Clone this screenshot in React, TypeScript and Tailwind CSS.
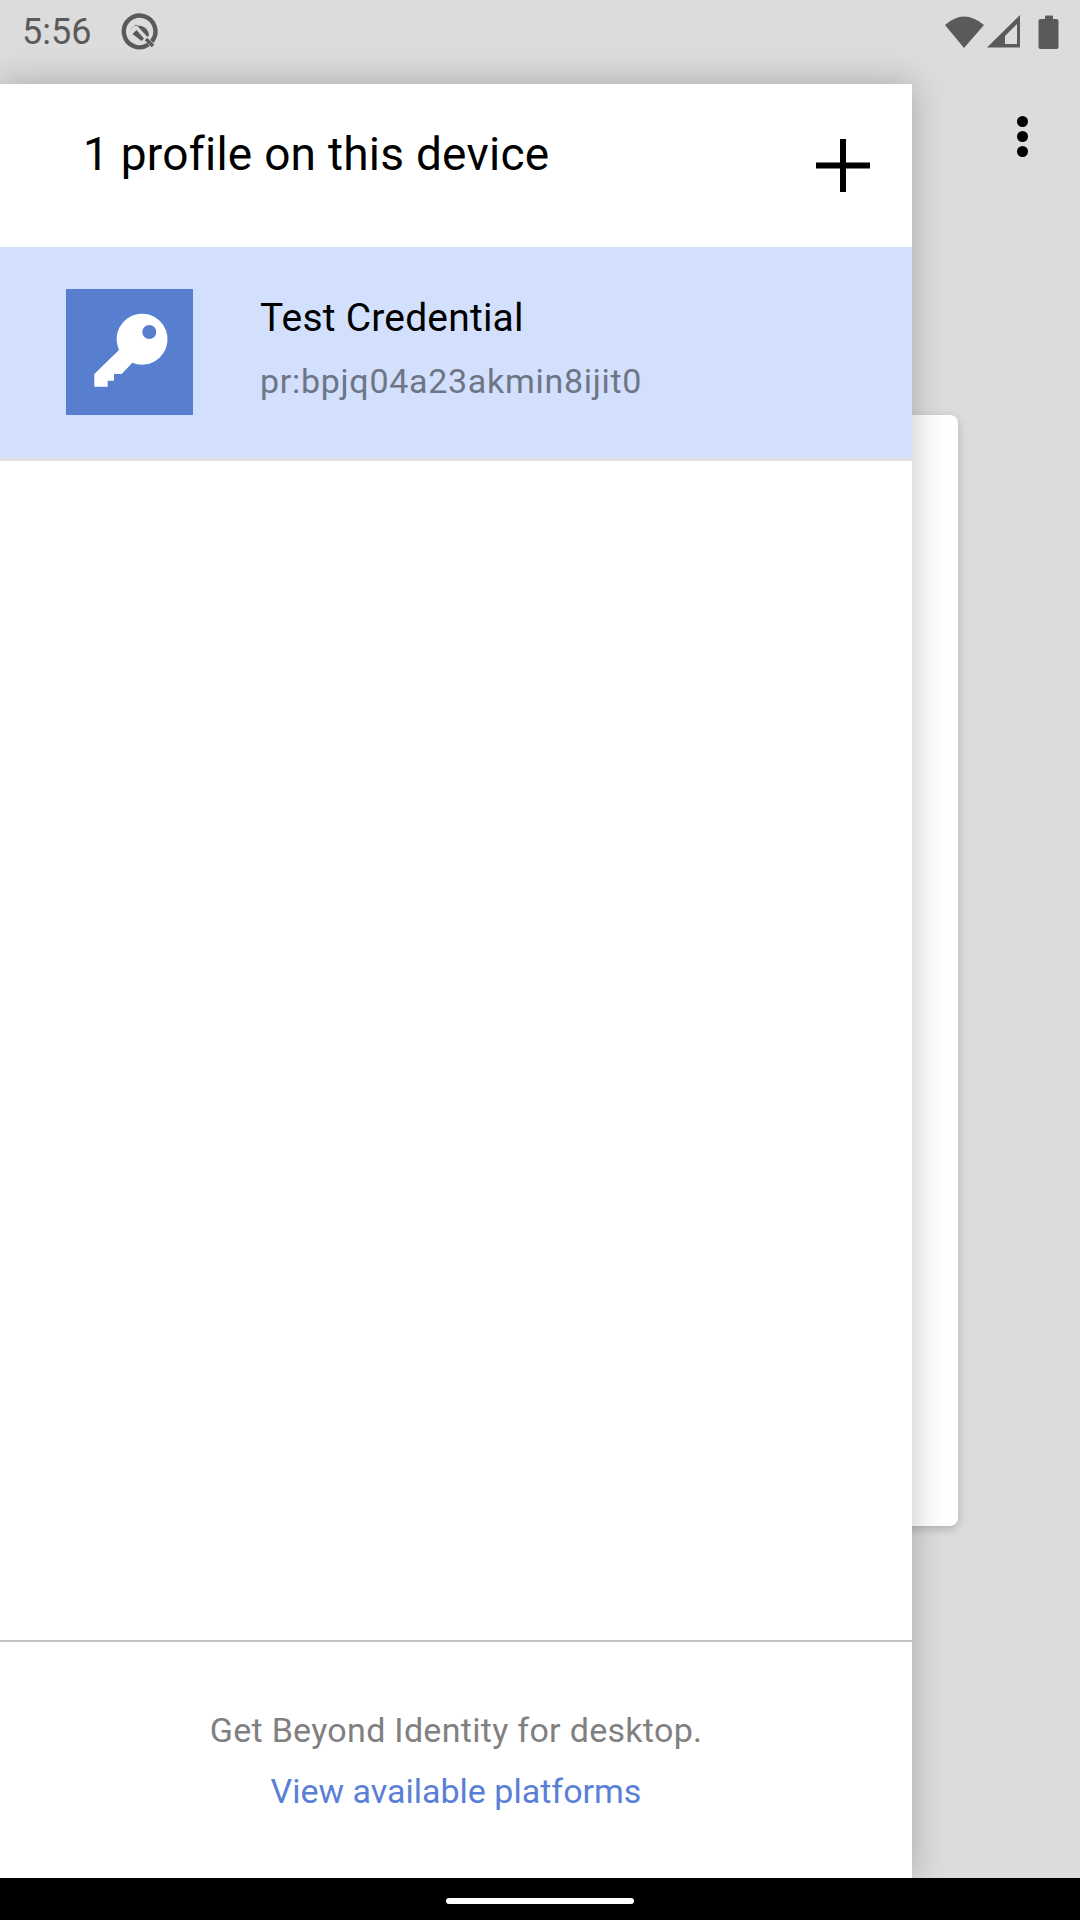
function QIcon() {
  return (
    <svg width="38" height="38" viewBox="0 0 38 38">
      <path d="M28.5 31.5A15.8 15.8 0 1 1 31.8 28.5" fill="none" stroke="#5a5a5a" strokeWidth="4.4" />
      <path d="M33 33L26 26" stroke="#5a5a5a" strokeWidth="3.6" />
      <path d="M10 17A10.5 10.5 0 0 1 29 22L27.5 24L16 11.5Z" fill="#5a5a5a" />
      <path d="M16.5 17L24 25.5L21.5 28L12.5 21Z" fill="#5a5a5a" />
    </svg>
  );
}

function StatusIcons() {
  return (
    <svg width="116" height="36" viewBox="0 0 116 36">
      {/* wifi */}
      <path d="M1 11Q20 -6 40 11L20 34Z" fill="#5a5a5a" />
      {/* signal */}
      <path fillRule="evenodd" d="M43 33.5L76 1V33.5ZM61 30H73V10L61 22Z" fill="#5a5a5a" />
      {/* battery */}
      <path d="M101 2.5a1 1 0 0 1 1-1h6a1 1 0 0 1 1 1V5h3.5a2 2 0 0 1 2 2v26a2 2 0 0 1-2 2h-16a2 2 0 0 1-2-2V7a2 2 0 0 1 2-2H101Z" fill="#5a5a5a" />
    </svg>
  );
}

function KeyIcon() {
  return (
    <svg width="127" height="126" viewBox="0 0 127 126">
      <path
        fillRule="evenodd"
        fill="#fff"
        d="M53 61L28.3 85V97.7H41.7V91.7H48V85H55.7L66.3 73.7A25.5 25.5 0 1 0 53 61ZM76.3 43a7 7 0 1 0 14 0a7 7 0 1 0 -14 0Z"
      />
    </svg>
  );
}

export default function App() {
  return (
    <div
      className="relative flex h-[1920px] w-[1080px] flex-col overflow-hidden bg-[#dcdcdc]"
      style={{ fontFamily: "Roboto, sans-serif" }}
    >
      {/* status bar */}
      <div className="flex h-[63px] items-center justify-between pl-[22px] pr-[20px] pt-[1px]">
        <div className="flex items-center gap-[29px]">
          <span className="text-[36px] leading-[40px] text-[#5a5a5a]">5:56</span>
          <QIcon />
        </div>
        <StatusIcons />
      </div>

      {/* screen behind the drawer */}
      <div className="flex flex-1 flex-col items-end">
        <div className="mr-[52px] mt-[53px] flex flex-col gap-[4px]">
          <span className="h-[11px] w-[11px] rounded-full bg-black" />
          <span className="h-[11px] w-[11px] rounded-full bg-black" />
          <span className="h-[11px] w-[11px] rounded-full bg-black" />
        </div>
        <div className="mr-[122px] mt-[258px] h-[1111px] w-[300px] rounded-[8px] bg-white shadow-[0_3px_10px_rgba(0,0,0,0.2)]" />
      </div>

      {/* drawer */}
      <div className="absolute bottom-[42px] left-0 top-[84px] z-10 flex w-[912px] flex-col bg-white shadow-[0_0_32px_rgba(0,0,0,0.24)]">
        <div className="flex h-[163px] shrink-0 justify-between pl-[83px] pr-[42px]">
          <h1 className="mt-[46px] text-[46px] leading-[48px] tracking-[0.25px] text-black">1 profile on this device</h1>
          <svg className="mt-[55px]" width="54" height="53" viewBox="0 0 54 53">
            <path d="M0 26.5H54M27 0V53" stroke="#000" strokeWidth="6" />
          </svg>
        </div>
        <div className="flex h-[214px] shrink-0 gap-[67px] border-b-[3px] border-[#e0e0e0] bg-[#d2e0fd] pl-[66px] pt-[42px]">
          <div className="h-[126px] w-[127px] shrink-0 bg-[#587ed0]">
            <KeyIcon />
          </div>
          <div className="flex flex-col pt-[7px]">
            <span className="text-[39px] leading-[44px] tracking-[0.2px] text-black">Test Credential</span>
            <span className="mt-[21px] text-[34px] leading-[40px] tracking-[0.7px] text-[#6e7585]">pr:bpjq04a23akmin8ijit0</span>
          </div>
        </div>
        <div className="flex-1" />
        <div className="flex h-[238px] shrink-0 flex-col items-center border-t-2 border-[#c4c4c4] pt-[68px]">
          <span className="text-[34px] leading-[40px] tracking-[0.3px] text-[#808080]">Get Beyond Identity for desktop.</span>
          <span className="mt-[21px] text-[34px] leading-[40px] text-[#5a7fd6]">View available platforms</span>
        </div>
      </div>

      {/* navigation bar */}
      <div className="relative z-20 flex h-[42px] shrink-0 justify-center bg-black pt-[20px]">
        <span className="h-[6px] w-[188px] rounded-full bg-white" />
      </div>
    </div>
  );
}
